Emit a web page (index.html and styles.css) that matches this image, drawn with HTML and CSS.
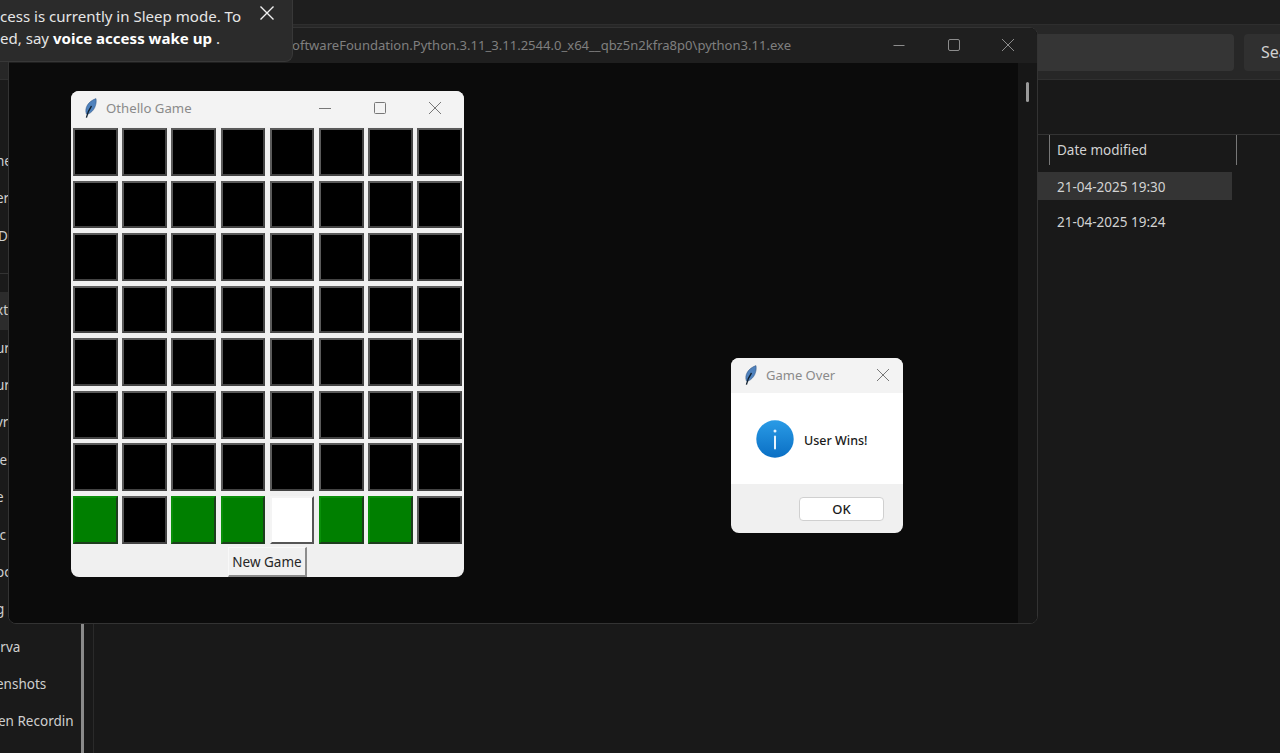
FILE: index.html
```html
<!DOCTYPE html>
<html lang="en">
<head>
  <meta charset="UTF-8">
  <title>Othello Game</title>
  <link rel="stylesheet" href="styles.css">
</head>
<body>

  <!-- file explorer behind everything -->
  <div class="explorer">
    <div class="top-strip"></div>
    <div class="toolbar">
      <div class="search-box"></div>
      <div class="search-btn">Sea</div>
    </div>
    <div class="explorer-body">
      <div class="sidebar">
        <div class="side-item">he</div>
        <div class="side-item">er</div>
        <div class="side-item side-near">D</div>
        <div class="side-sep"></div>
        <div class="side-item side-selected">xt</div>
        <div class="side-item">ur</div>
        <div class="side-item">ur</div>
        <div class="side-item">vr</div>
        <div class="side-item">ie</div>
        <div class="side-item">e</div>
        <div class="side-item">ic</div>
        <div class="side-item">oc</div>
        <div class="side-item">g</div>
        <div class="side-item side-far">urva</div>
        <div class="side-item">enshots</div>
        <div class="side-item side-near">en Recordin</div>
      </div>
      <div class="side-scroll"></div>
      <div class="files">
        <div class="col-head">
          <div class="col-date">Date modified</div>
        </div>
        <div class="file-row file-selected">21-04-2025 19:30</div>
        <div class="file-row">21-04-2025 19:24</div>
      </div>
    </div>
  </div>

  <!-- console window -->
  <div class="console">
    <div class="console-title">
      <span class="console-path">oftwareFoundation.Python.3.11_3.11.2544.0_x64__qbz5n2kfra8p0\python3.11.exe</span>
      <div class="win-buttons console-buttons">
        <svg width="14" height="14" viewBox="0 0 14 14"><path d="M1.5 7.5h11"/></svg>
        <svg width="14" height="14" viewBox="0 0 14 14"><rect x="1.5" y="1.5" width="11" height="11" rx="1.5"/></svg>
        <svg width="14" height="14" viewBox="0 0 14 14"><path d="M1 1l12 12M13 1L1 13"/></svg>
      </div>
    </div>
    <div class="console-body">
      <div class="console-client"></div>
      <div class="console-scroll"><div class="console-thumb"></div></div>
    </div>
  </div>

  <!-- voice access toast -->
  <div class="toast">
    <div class="toast-text">
      <div>cess is currently in Sleep mode. To</div>
      <div>ed, say <b>voice access wake up</b> .</div>
    </div>
    <svg class="toast-close" width="16" height="16" viewBox="0 0 16 16"><path d="M1.5 1.5l13 13M14.5 1.5l-13 13"/></svg>
  </div>

  <!-- game window -->
  <div class="game">
    <div class="tk-title">
      <svg class="feather" width="16" height="20" viewBox="0 0 16 20"><path class="quill-fill" d="M3.4 16C1.2 10.5 5 3.2 13 .6 14 6.5 11.2 13.5 5.2 16z"/><path class="quill-line" d="M3.4 19.6C4.4 15 6 11.5 8.5 8"/></svg>
      <span class="tk-name">Othello Game</span>
      <div class="win-buttons game-buttons">
        <svg width="14" height="14" viewBox="0 0 14 14"><path d="M1 7.5h12"/></svg>
        <svg width="14" height="14" viewBox="0 0 14 14"><rect x="1.5" y="1.5" width="11" height="11" rx="1"/></svg>
        <svg width="14" height="14" viewBox="0 0 14 14"><path d="M1 1l12 12M13 1L1 13"/></svg>
      </div>
    </div>
    <div class="board" id="board"></div>
    <div class="game-foot">
      <div class="new-game">New Game</div>
    </div>
  </div>

  <!-- message box -->
  <div class="dialog">
    <div class="tk-title dialog-title">
      <svg class="feather" width="16" height="20" viewBox="0 0 16 20"><path class="quill-fill" d="M3.4 16C1.2 10.5 5 3.2 13 .6 14 6.5 11.2 13.5 5.2 16z"/><path class="quill-line" d="M3.4 19.6C4.4 15 6 11.5 8.5 8"/></svg>
      <span class="tk-name">Game Over</span>
      <svg class="dialog-close" width="14" height="14" viewBox="0 0 14 14"><path d="M1 1l12 12M13 1L1 13"/></svg>
    </div>
    <div class="dialog-msg">
      <div class="info-icon">
        <svg width="38" height="38" viewBox="0 0 38 38">
          <defs>
            <linearGradient id="infoBlue" x1="0" y1="0" x2="0" y2="1">
              <stop offset="0" stop-color="#2a9be6"/>
              <stop offset="1" stop-color="#0a6fc4"/>
            </linearGradient>
          </defs>
          <circle cx="19" cy="19" r="18.7" fill="url(#infoBlue)"/>
          <rect x="18" y="15.5" width="2" height="14" rx="1" fill="#e8f4fd"/>
          <circle cx="19" cy="11" r="1.5" fill="#e8f4fd"/>
        </svg>
      </div>
      <span class="msg-text">User Wins!</span>
    </div>
    <div class="dialog-foot">
      <div class="ok-btn">OK</div>
    </div>
  </div>

  <script>
    // only the bottom row has any colour
    const lastRow = ['g', 'k', 'g', 'g', 'w', 'g', 'g', 'k'];
    const board = document.getElementById('board');
    for (let r = 0; r < 8; r++) {
      for (let c = 0; c < 8; c++) {
        const cell = document.createElement('div');
        const kind = r === 7 ? lastRow[c] : 'k';
        cell.className = 'cell cell-' + kind;
        board.appendChild(cell);
      }
    }
  </script>
</body>
</html>
```

FILE: styles.css
```css
html, body { margin: 0; padding: 0; }
body {
  width: 1280px;
  height: 753px;
  overflow: hidden;
  position: relative;
  background: #191919;
  font-family: "Noto Sans", "Open Sans", sans-serif;
}

/* explorer */
.explorer { display: flex; flex-direction: column; height: 753px; }
.top-strip { height: 24px; background: #1e1e1e; }
.toolbar {
  height: 56px;
  box-sizing: border-box;
  background: #272727;
  border-top: 1px solid #2e2e2e;
  border-bottom: 1px solid #303030;
  display: flex;
  align-items: center;
  justify-content: flex-end;
  gap: 10px;
}
.search-box { width: 200px; height: 37px; background: #353535; border-radius: 4px; }
.search-btn {
  width: 36px;
  height: 37px;
  background: #303030;
  border-radius: 4px 0 0 4px;
  color: #d0d0d0;
  font-size: 16px;
  line-height: 37px;
  padding-left: 17px;
  margin-right: -17px;
  overflow: hidden;
}
.explorer-body { flex: 1; display: flex; min-height: 0; }

.sidebar { width: 81px; padding-top: 63px; color: #cfcfcf; font-size: 13.5px; background: #1a1a1a; }
.side-item { height: 37.4px; line-height: 37.4px; white-space: nowrap; overflow: hidden; text-indent: -4px; }
.side-far { text-indent: -8px; }
.side-near { text-indent: -2px; }
.side-sep { height: 1px; margin: 18px 0 18px; background: #333; }
.side-selected { background: #2c2c2c; }
.side-scroll { width: 3px; background: #8a8a8a; }
.files { flex: 1; border-left: 1px solid #2a2a2a; margin-left: 9px; padding-top: 54px; color: #d2d2d2; font-size: 13.5px; }
.col-head {
  height: 30px;
  border-top: 1px solid #333;
  padding-left: 955px;
  margin-bottom: 7px;
}
.col-date {
  width: 179px;
  height: 30px;
  line-height: 30px;
  padding-left: 7px;
  border-left: 1px solid #777;
  border-right: 1px solid #777;
}
.file-row { height: 28px; line-height: 30px; padding-left: 963px; margin-bottom: 7px; width: 175px; }
.file-selected { background: #343434; }

/* console window */
.console {
  position: absolute;
  left: 8px;
  top: 27px;
  width: 1030px;
  height: 597px;
  box-sizing: border-box;
  border: 1px solid #333;
  border-radius: 8px;
  overflow: hidden;
  display: flex;
  flex-direction: column;
  background: #0c0c0c;
}
.console-title {
  height: 35px;
  flex: none;
  box-sizing: border-box;
  padding-bottom: 2px;
  background: #1f1f1f;
  display: flex;
  align-items: center;
  padding-left: 283px;
  color: #7f7f7f;
  font-size: 13.05px;
  white-space: nowrap;
}
.console-path { flex: 1; }
.win-buttons svg { fill: none; stroke: currentColor; stroke-width: 1; display: block; }
.win-buttons { display: flex; align-items: center; }
.console-buttons { gap: 40.5px; color: #8c8c8c; padding-right: 22px; }
.console-body { flex: 1; display: flex; min-height: 0; }
.console-client { flex: 1; background: #0b0b0b; }
.console-scroll { width: 19px; background: #171717; padding: 19px 0 0 8px; box-sizing: border-box; }
.console-thumb { width: 3px; height: 20px; background: #9a9a9a; border-radius: 2px; }

/* toast */
.toast {
  position: absolute;
  left: 0;
  top: 0;
  width: 293px;
  height: 62px;
  box-sizing: border-box;
  background: #2b2b2b;
  border: 1px solid #383838;
  border-left: 0;
  border-top: 0;
  border-radius: 0 0 8px 0;
  color: #e6e6e6;
  font-size: 15.05px;
  line-height: 22px;
  white-space: nowrap;
  overflow: hidden;
  display: flex;
  justify-content: space-between;
}
.toast-text { padding-top: 5px; }
.toast-text b { color: #fff; }
.toast-close { fill: none; stroke: #f0f0f0; stroke-width: 1.4; margin: 5px 17px 0 0; }

/* tk windows */
.game, .dialog { position: absolute; background: #f0f0f0; overflow: hidden; border-radius: 8px; }
.game { left: 71px; top: 91px; width: 393px; height: 486px; }
.tk-title {
  display: flex;
  align-items: center;
  height: 36px;
  background: #f3f3f3;
  padding: 0 0 2px 12px;
  box-sizing: border-box;
  color: #8a8a8a;
  font-size: 13.2px;
}
.feather { flex: none; margin-right: 7px; }
.quill-fill { fill: #4f82bd; stroke: #2c4f7c; stroke-width: .5; }
.quill-line { fill: none; stroke: #10202f; stroke-width: 1.3; }
.tk-name { flex: 1; }
.game-buttons { gap: 41px; color: #777; padding-right: 22px; }

.board {
  display: grid;
  grid-template-columns: repeat(8, 44.6px);
  grid-auto-rows: 47.7px;
  column-gap: 4.6px;
  row-gap: 4.9px;
  padding: 1px 0 0 2px;
}
.cell { box-sizing: border-box; border: 2px solid #434343; border-top-color: #5a5a5a; border-left-color: #5a5a5a; }
.cell-k { background: #000; }
.cell-g { background: #007f00; border-color: #0a8f0a #1d3d1d #1d3d1d #0a8f0a; }
.cell-w { background: #fff; border-color: #f4f4f4 #555 #555 #f4f4f4; }

.game-foot { display: flex; padding: 3px 0 0 157px; }
.new-game {
  width: 79px;
  height: 30px;
  box-sizing: border-box;
  background: #f0f0f0;
  border: 1px solid #f8f8f8;
  border-right: 2px solid #8c8c8c;
  border-bottom: 2px solid #8c8c8c;
  color: #262626;
  font-size: 13.5px;
  line-height: 28px;
  text-align: center;
  white-space: nowrap;
}

/* message box */
.dialog { left: 731px; top: 358px; width: 172px; height: 175px; display: flex; flex-direction: column; }
.dialog-title { height: 35px; flex: none; font-size: 13px; }
.dialog-close { flex: none; fill: none; stroke: #777; stroke-width: 1; margin-right: 13px; }
.dialog-msg {
  height: 91px;
  flex: none;
  background: #fff;
  display: flex;
  align-items: center;
  padding-left: 25px;
  gap: 10px;
}
.info-icon { height: 38px; }
.msg-text { color: #1a1a1a; font-size: 12.5px; font-weight: 500; padding-top: 3px; }
.dialog-foot { flex: 1; display: flex; justify-content: flex-end; padding: 13px 19px 0 0; }
.ok-btn {
  width: 85px;
  height: 24px;
  box-sizing: border-box;
  background: #fff;
  border: 1px solid #d0d0d0;
  border-radius: 4px;
  color: #1a1a1a;
  font-size: 13px;
  font-weight: 500;
  line-height: 23px;
  text-align: center;
}
```
